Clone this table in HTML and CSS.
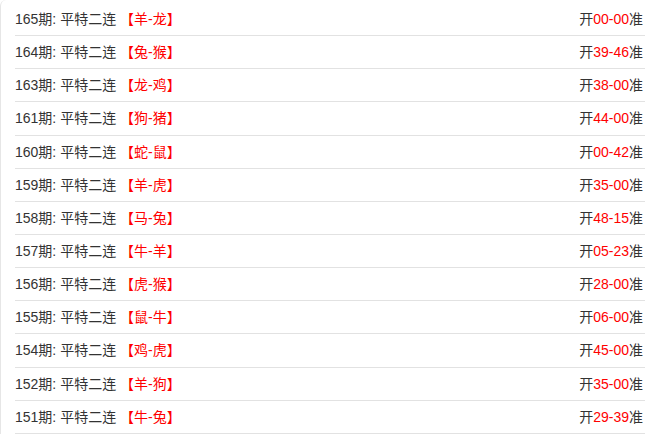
FILE: index.html
```html
<!DOCTYPE html>
<html lang="zh-CN">
<head>
  <meta charset="UTF-8" />
  <meta name="viewport" content="width=device-width, initial-scale=1.0" />
  <title>平特二连</title>
  <link rel="stylesheet" href="styles.css">
</head>
<body>
  <div class="box">
    <ul class="record-list">
      <li class="record"><span class="left">165期: 平特二连 <em>【羊-龙】</em></span><span class="right">开<em>00-00</em>准</span></li>
      <li class="record"><span class="left">164期: 平特二连 <em>【兔-猴】</em></span><span class="right">开<em>39-46</em>准</span></li>
      <li class="record"><span class="left">163期: 平特二连 <em>【龙-鸡】</em></span><span class="right">开<em>38-00</em>准</span></li>
      <li class="record"><span class="left">161期: 平特二连 <em>【狗-猪】</em></span><span class="right">开<em>44-00</em>准</span></li>
      <li class="record"><span class="left">160期: 平特二连 <em>【蛇-鼠】</em></span><span class="right">开<em>00-42</em>准</span></li>
      <li class="record"><span class="left">159期: 平特二连 <em>【羊-虎】</em></span><span class="right">开<em>35-00</em>准</span></li>
      <li class="record"><span class="left">158期: 平特二连 <em>【马-兔】</em></span><span class="right">开<em>48-15</em>准</span></li>
      <li class="record"><span class="left">157期: 平特二连 <em>【牛-羊】</em></span><span class="right">开<em>05-23</em>准</span></li>
      <li class="record"><span class="left">156期: 平特二连 <em>【虎-猴】</em></span><span class="right">开<em>28-00</em>准</span></li>
      <li class="record"><span class="left">155期: 平特二连 <em>【鼠-牛】</em></span><span class="right">开<em>06-00</em>准</span></li>
      <li class="record"><span class="left">154期: 平特二连 <em>【鸡-虎】</em></span><span class="right">开<em>45-00</em>准</span></li>
      <li class="record"><span class="left">152期: 平特二连 <em>【羊-狗】</em></span><span class="right">开<em>35-00</em>准</span></li>
      <li class="record"><span class="left">151期: 平特二连 <em>【牛-兔】</em></span><span class="right">开<em>29-39</em>准</span></li>
    </ul>
  </div>
</body>
</html>
```

FILE: styles.css
```css
* {
  margin: 0;
  padding: 0;
  box-sizing: border-box;
}

body {
  font-family: "Liberation Sans", "Noto Sans CJK SC", sans-serif;
  font-size: 14px;
  color: #333;
  background-color: #fff;
}

.box {
  border-left: 1px solid #e6e6e6;
  border-top-left-radius: 6px;
  min-height: 434px;
  padding: 3px 10px 0 14px;
}

.record-list {
  list-style: none;
}

.record {
  display: flex;
  justify-content: space-between;
  height: 33.15px;
  line-height: 32px;
  padding-right: 2px;
  border-bottom: 1px solid #e2e2e2;
  white-space: nowrap;
}

.record em {
  font-style: normal;
  color: #ff0000;
}
```
